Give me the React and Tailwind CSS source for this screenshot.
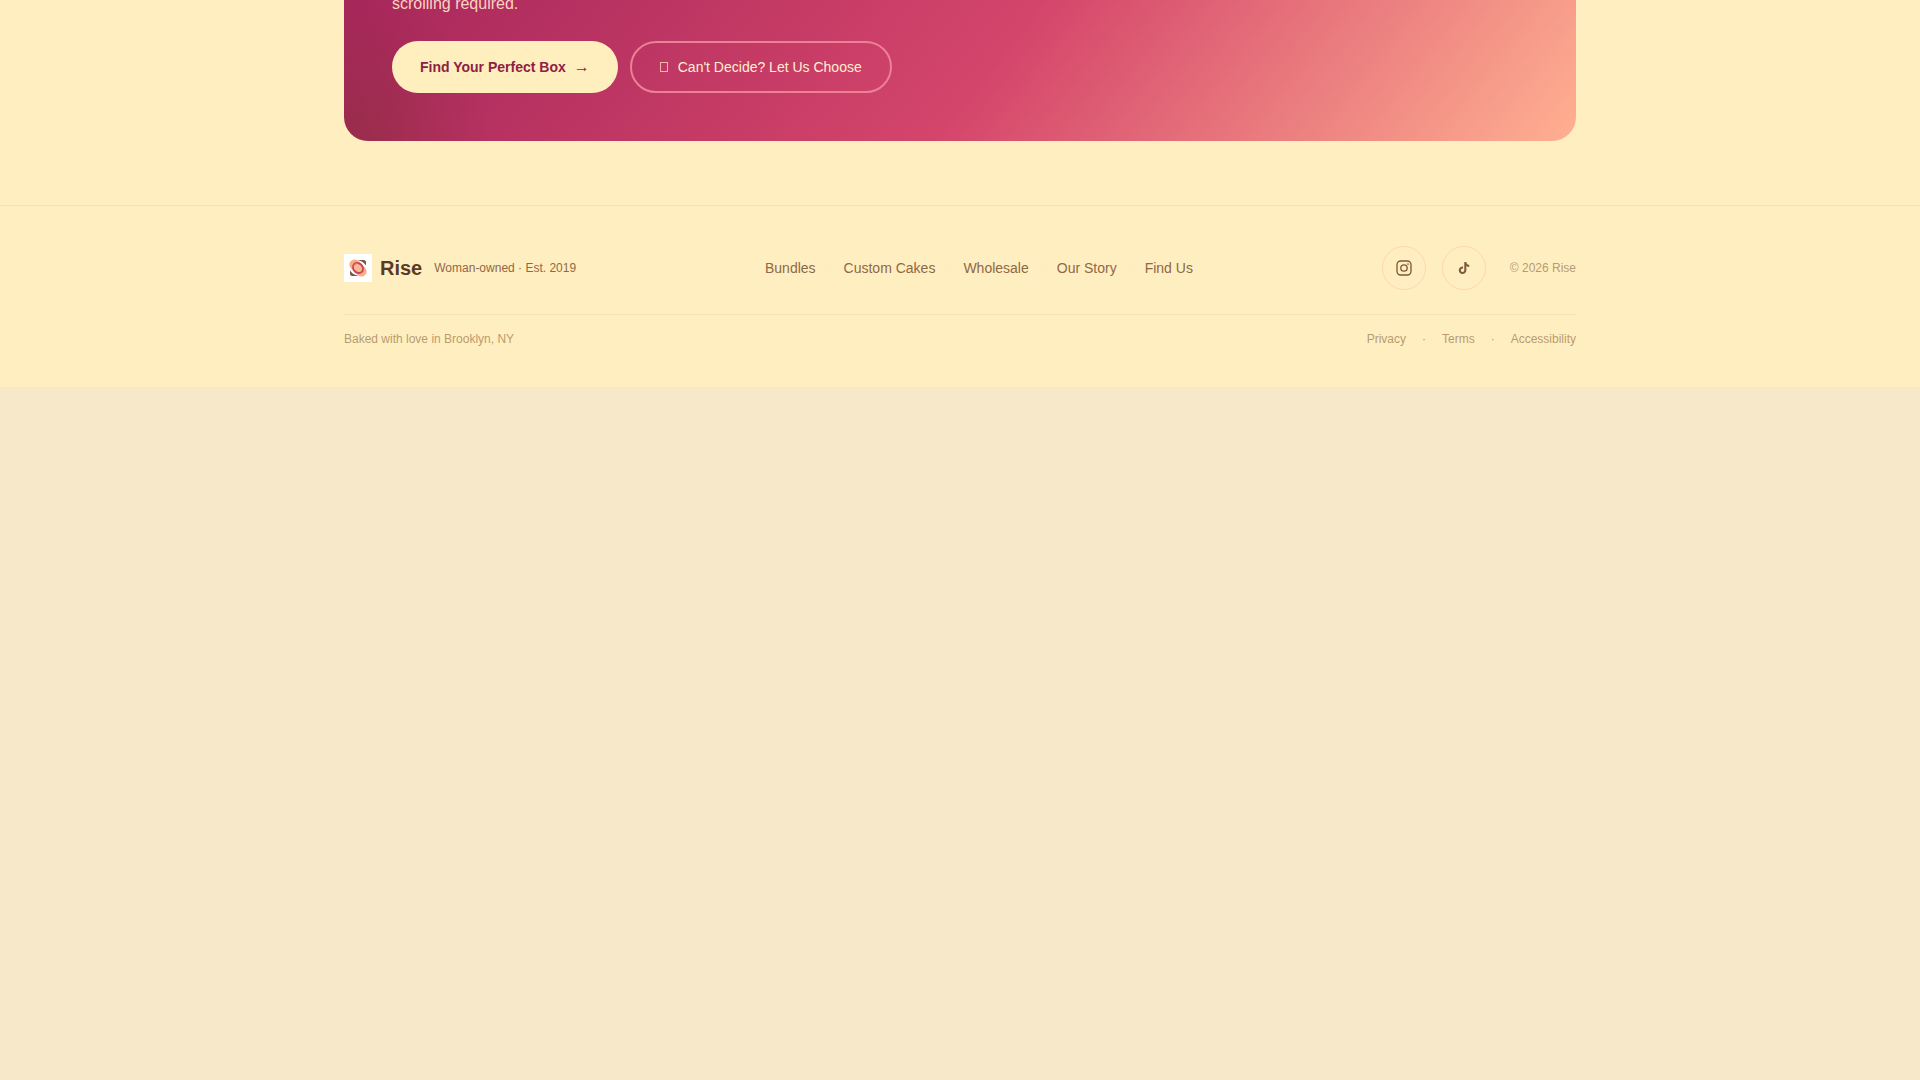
import React from "react";

const navLinks = ["Bundles", "Custom Cakes", "Wholesale", "Our Story", "Find Us"];
const legalLinks = ["Privacy", "Terms", "Accessibility"];

function Logo() {
  return (
    <svg viewBox="0 0 28 28" className="size-7 bg-white" aria-hidden="true">
      <path d="M13 6h6.500q2.500 0 2.500 2.500v3q-3-4.600-9-5.500z" fill="#74563c" />
      <path d="M15 22H8.500Q6 22 6 19.500v-3q3 4.600 9 5.500z" fill="#74563c" />
      <rect x="4" y="8.800" width="20" height="10.400" rx="5.200" transform="rotate(45 14 14)" fill="#f8ad84" />
      <ellipse cx="14" cy="14" rx="5.400" ry="4.600" transform="rotate(45 14 14)" fill="#f9b98f" stroke="#cf4159" strokeWidth="1.800" />
      <path d="M9.500 12.500q.8-3 4-3.200" fill="none" stroke="#ec8a78" strokeWidth="0.800" />
    </svg>
  );
}

function InstagramIcon() {
  return (
    <svg viewBox="0 0 24 24" className="size-4" fill="none" stroke="currentColor" strokeWidth="2" aria-hidden="true">
      <rect x="1.500" y="1.500" width="21" height="21" rx="5.500" />
      <circle cx="12" cy="12" r="4.800" />
      <circle cx="18" cy="6" r="1.300" fill="currentColor" stroke="none" />
    </svg>
  );
}

function TikTokIcon() {
  return (
    <svg viewBox="0 0 24 24" className="size-4" fill="currentColor" aria-hidden="true">
      <path d="M16.600 5.820a4.280 4.280 0 0 1-1.060-2.820h-3.090v12.400a2.590 2.590 0 0 1-2.590 2.500 2.590 2.590 0 1 1 .770-5.070V9.660a5.700 5.700 0 1 0 4.910 5.680V9.010a7.350 7.350 0 0 0 4.300 1.380V7.300a4.280 4.280 0 0 1-3.240-1.480z" />
    </svg>
  );
}

function CallToAction() {
  return (
    <section className="-mt-60 pb-16">
      <div className="mx-auto max-w-7xl px-6">
        <div className="rounded-3xl bg-[radial-gradient(circle_at_0%_100%,rgba(110,45,40,0.35),transparent_150px),linear-gradient(128deg,#9b1f57_0%,#d4456b_58%,#ffb091_100%)] px-12 pt-[231px] pb-12">
          <p className="text-base leading-[26px] text-[#fbd3bf]">scrolling required.</p>
          <div className="mt-6 flex flex-wrap gap-3">
            <button className="flex h-13 items-center gap-2 rounded-full bg-[#ffefbf] px-7 text-sm font-bold text-[#8f2044]">
              <span>Find Your Perfect Box</span>
              <span className="text-base font-normal">→</span>
            </button>
            <button className="flex h-13 items-center gap-2.5 rounded-full border-2 border-[#ec8095] px-7 text-sm text-[#ffefcf]">
              <span className="h-[10px] w-2 border border-[#f3b3a8]" aria-hidden="true" />
              <span>Can't Decide? Let Us Choose</span>
            </button>
          </div>
        </div>
      </div>
    </section>
  );
}

function Footer() {
  return (
    <footer className="border-t border-[#fddcb8] py-10">
      <div className="mx-auto max-w-7xl px-6">
        <div className="flex flex-wrap items-center justify-between gap-6">
          <div className="flex items-center gap-3">
            <a href="#" className="flex items-center gap-2 text-xl font-bold text-[#5a3a25]">
              <Logo />
              <span>Rise</span>
            </a>
            <span className="text-xs text-[#8f6847]">Woman-owned · Est. 2019</span>
          </div>
          <nav className="flex flex-wrap items-center gap-3 text-sm text-[#8f6847]">
            {navLinks.map((label, i) => (
              <React.Fragment key={label}>
                {i > 0 && <span className="text-xs text-[#fbe3b8]" aria-hidden="true">·</span>}
                <a href="#">{label}</a>
              </React.Fragment>
            ))}
          </nav>
          <div className="flex items-center gap-4 text-[#7d5a3c]">
            <a href="#" aria-label="Instagram" className="flex size-11 items-center justify-center rounded-full border border-[#fed5b3]">
              <InstagramIcon />
            </a>
            <a href="#" aria-label="TikTok" className="flex size-11 items-center justify-center rounded-full border border-[#fed5b3]">
              <TikTokIcon />
            </a>
            <span className="ml-2 text-xs text-[#b89b72]">© 2026 Rise</span>
          </div>
        </div>
        <div className="mt-6 flex flex-wrap items-center justify-between gap-4 border-t border-[#f9e1b4] pt-4 text-xs text-[#b89b72]">
          <p>Baked with love in Brooklyn, NY</p>
          <div className="flex items-center gap-4">
            {legalLinks.map((label, i) => (
              <React.Fragment key={label}>
                {i > 0 && <span aria-hidden="true">·</span>}
                <a href="#">{label}</a>
              </React.Fragment>
            ))}
          </div>
        </div>
      </div>
    </footer>
  );
}

export default function App() {
  return (
    <div className="min-h-screen overflow-hidden bg-[#f6e8c9] font-['Liberation_Sans',Arial,sans-serif]">
      <main className="flow-root overflow-hidden bg-[#ffefc0]">
        <CallToAction />
        <Footer />
      </main>
    </div>
  );
}
